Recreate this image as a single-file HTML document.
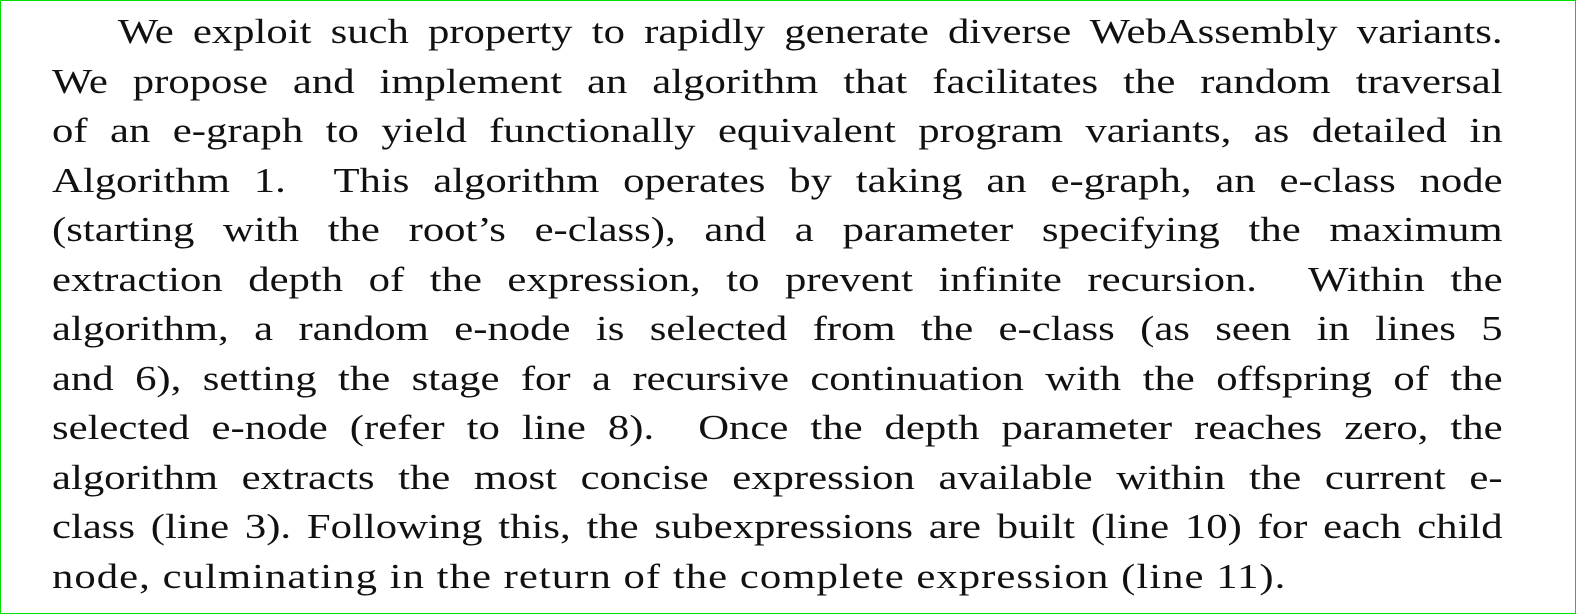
<!DOCTYPE html>
<html><head><meta charset="utf-8"><style>
html,body{margin:0;padding:0;background:#fff;}
body{width:1576px;height:614px;position:relative;overflow:hidden;}
.frame{position:absolute;left:0;top:0;width:1574px;height:612px;border:1px solid #00e000;}
.txt{position:absolute;left:52px;top:7px;width:1189px;font-family:"Liberation Serif",serif;font-size:35px;line-height:49.5px;color:#111;transform:scaleX(1.22);transform-origin:0 0;}
.l{display:block;text-align:justify;text-align-last:justify;white-space:nowrap;height:49.5px;}
.l.last{text-align-last:left;letter-spacing:0.85px;}
.ind{padding-left:54px;}
</style></head><body>
<div class="frame"></div>
<div class="txt">
<div class="l ind">We exploit such property to rapidly generate diverse WebAssembly variants.</div>
<div class="l">We propose and implement an algorithm that facilitates the random traversal</div>
<div class="l">of an e-graph to yield functionally equivalent program variants, as detailed in</div>
<div class="l">Algorithm 1. &nbsp;This algorithm operates by taking an e-graph, an e-class node</div>
<div class="l">(starting with the root’s e-class), and a parameter specifying the maximum</div>
<div class="l">extraction depth of the expression, to prevent infinite recursion. &nbsp;Within the</div>
<div class="l">algorithm, a random e-node is selected from the e-class (as seen in lines 5</div>
<div class="l">and 6), setting the stage for a recursive continuation with the offspring of the</div>
<div class="l">selected e-node (refer to line 8). &nbsp;Once the depth parameter reaches zero, the</div>
<div class="l">algorithm extracts the most concise expression available within the current e-</div>
<div class="l">class (line 3). Following this, the subexpressions are built (line 10) for each child</div>
<div class="l last">node, culminating in the return of the complete expression (line 11).</div>
</div>
</body></html>
